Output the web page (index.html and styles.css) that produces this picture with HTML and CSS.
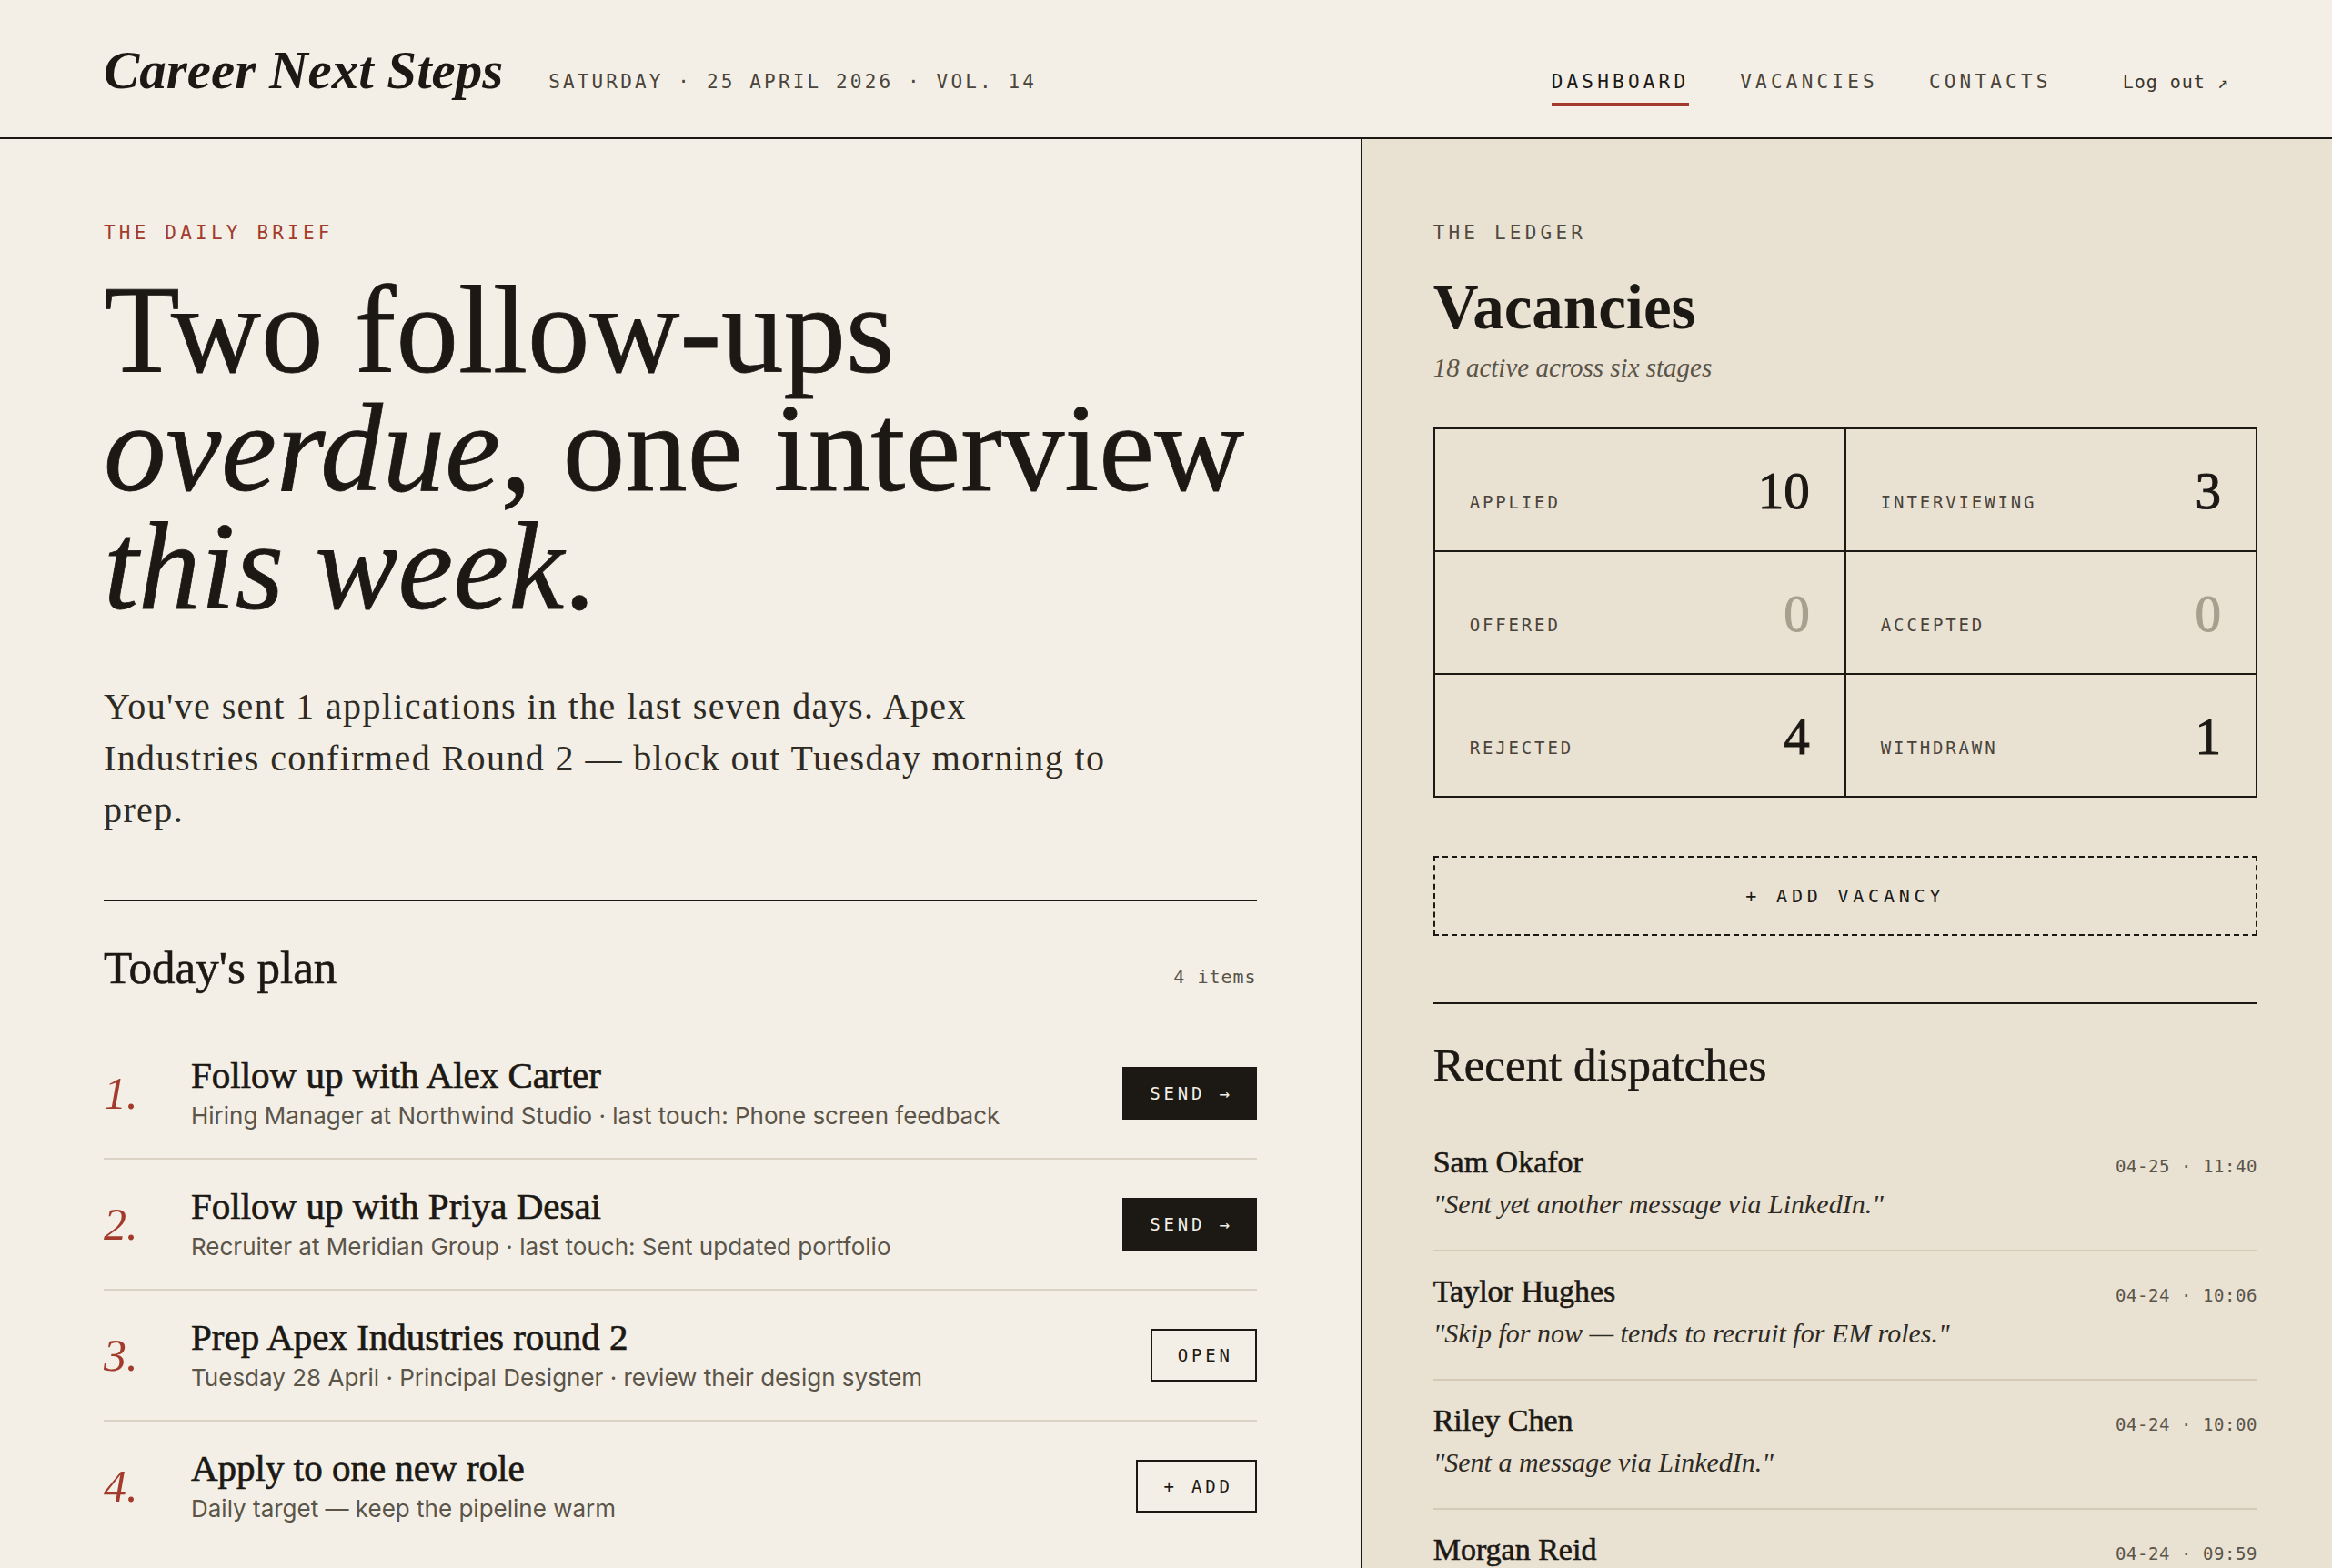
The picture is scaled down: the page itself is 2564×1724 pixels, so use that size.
FILE: index.html
```html
<!DOCTYPE html>
<html lang="en">
<head>
  <meta charset="UTF-8" />
  <meta name="viewport" content="width=device-width, initial-scale=1" />
  <title>Career Next Steps — Dashboard</title>
  <link rel="stylesheet" href="styles.css">
</head>
<body>
  <header class="masthead">
    <div class="brand">
      <span class="logo">Career Next Steps</span>
      <span class="dateline">Saturday · 25 April 2026 · Vol. 14</span>
    </div>
    <nav class="nav">
      <a class="nav-link active" href="#">Dashboard</a>
      <a class="nav-link" href="#">Vacancies</a>
      <a class="nav-link" href="#">Contacts</a>
      <a class="nav-link logout" href="#">Log out ↗</a>
    </nav>
  </header>

  <main class="layout">
    <section class="brief">
      <p class="eyebrow red">The daily brief</p>
      <h1 class="headline">Two follow-ups<br><em>overdue</em>, one interview<br><em>this week</em>.</h1>
      <p class="lede">You've sent 1 applications in the last seven days. Apex<br>Industries confirmed Round 2 — block out Tuesday morning to prep.</p>

      <div class="plan">
        <div class="section-head">
          <h2>Today's plan</h2>
          <span class="count">4 items</span>
        </div>
        <ol class="plan-list">
          <li class="plan-item">
            <span class="plan-num">1.</span>
            <div>
              <div class="plan-title">Follow up with Alex Carter</div>
              <div class="plan-meta">Hiring Manager at Northwind Studio · last touch: Phone screen feedback</div>
            </div>
            <a class="btn btn-solid" href="#">Send →</a>
          </li>
          <li class="plan-item">
            <span class="plan-num">2.</span>
            <div>
              <div class="plan-title">Follow up with Priya Desai</div>
              <div class="plan-meta">Recruiter at Meridian Group · last touch: Sent updated portfolio</div>
            </div>
            <a class="btn btn-solid" href="#">Send →</a>
          </li>
          <li class="plan-item">
            <span class="plan-num">3.</span>
            <div>
              <div class="plan-title">Prep Apex Industries round 2</div>
              <div class="plan-meta">Tuesday 28 April · Principal Designer · review their design system</div>
            </div>
            <a class="btn btn-outline" href="#">Open</a>
          </li>
          <li class="plan-item">
            <span class="plan-num">4.</span>
            <div>
              <div class="plan-title">Apply to one new role</div>
              <div class="plan-meta">Daily target — keep the pipeline warm</div>
            </div>
            <a class="btn btn-outline" href="#">+ Add</a>
          </li>
        </ol>
      </div>
    </section>

    <aside class="ledger">
      <p class="eyebrow">The ledger</p>
      <h2 class="vac-title">Vacancies</h2>
      <p class="vac-sub">18 active across six stages</p>

      <div class="stats">
        <div class="stat"><span class="stat-label">Applied</span><span class="stat-num">10</span></div>
        <div class="stat"><span class="stat-label">Interviewing</span><span class="stat-num">3</span></div>
        <div class="stat"><span class="stat-label">Offered</span><span class="stat-num zero">0</span></div>
        <div class="stat"><span class="stat-label">Accepted</span><span class="stat-num zero">0</span></div>
        <div class="stat"><span class="stat-label">Rejected</span><span class="stat-num">4</span></div>
        <div class="stat"><span class="stat-label">Withdrawn</span><span class="stat-num">1</span></div>
      </div>

      <button class="add-vacancy" type="button">+ Add vacancy</button>

      <div class="dispatches">
        <div class="section-head">
          <h2>Recent dispatches</h2>
        </div>
        <ul class="dispatch-list">
          <li class="dispatch">
            <div class="dispatch-head">
              <span class="dispatch-name">Sam Okafor</span>
              <span class="dispatch-time">04-25 · 11:40</span>
            </div>
            <p class="dispatch-note">"Sent yet another message via LinkedIn."</p>
          </li>
          <li class="dispatch">
            <div class="dispatch-head">
              <span class="dispatch-name">Taylor Hughes</span>
              <span class="dispatch-time">04-24 · 10:06</span>
            </div>
            <p class="dispatch-note">"Skip for now — tends to recruit for EM roles."</p>
          </li>
          <li class="dispatch">
            <div class="dispatch-head">
              <span class="dispatch-name">Riley Chen</span>
              <span class="dispatch-time">04-24 · 10:00</span>
            </div>
            <p class="dispatch-note">"Sent a message via LinkedIn."</p>
          </li>
          <li class="dispatch">
            <div class="dispatch-head">
              <span class="dispatch-name">Morgan Reid</span>
              <span class="dispatch-time">04-24 · 09:59</span>
            </div>
            <p class="dispatch-note">"Intro call booked for next week."</p>
          </li>
        </ul>
      </div>
    </aside>
  </main>
</body>
</html>
```

FILE: styles.css
```css
* {
  box-sizing: border-box;
}

body {
  margin: 0;
  background: #f3efe6;
  color: #1c1915;
  font-family: "Liberation Serif", serif;
}

/* masthead */

.masthead {
  display: flex;
  justify-content: space-between;
  align-items: baseline;
  height: 153px;
  padding: 48px 113px 0 114px;
  border-bottom: 2px solid #1c1915;
}

.brand {
  display: flex;
  align-items: baseline;
  gap: 50px;
}

.logo {
  font-size: 59px;
  line-height: 1;
  font-style: italic;
  font-weight: 700;
}

.dateline,
.nav-link,
.eyebrow,
.count,
.btn,
.stat-label,
.add-vacancy,
.dispatch-time {
  font-family: "DejaVu Sans Mono", monospace;
  text-transform: uppercase;
}

.dateline {
  font-size: 21px;
  letter-spacing: 0.15em;
  color: #4a443b;
}

.nav {
  display: flex;
  align-items: baseline;
  gap: 56px;
}

.nav-link {
  font-size: 21px;
  line-height: 1.3;
  letter-spacing: 0.2em;
  color: #4a443b;
  text-decoration: none;
  padding-bottom: 9px;
  border-bottom: 4px solid transparent;
}

.nav-link.active {
  color: #1c1915;
  border-bottom-color: #a23b2c;
}

.nav-link.logout {
  margin-left: 22px;
  font-size: 20px;
  letter-spacing: 0.05em;
  text-transform: none;
  color: #3a352d;
}

/* columns */

.layout {
  display: grid;
  grid-template-columns: 7fr 5fr;
  min-height: calc(100vh - 153px);
}

.brief {
  padding: 90px 114px 40px;
}

.ledger {
  background: #e9e1d2;
  border-left: 2px solid #1c1915;
  padding: 90px 82px 40px 78px;
}

.eyebrow {
  margin: 0;
  font-size: 21px;
  line-height: 1.3;
  letter-spacing: 0.2em;
  color: #4f493f;
}

.eyebrow.red {
  color: #a23b2c;
}

.headline {
  margin: 28px 0 0;
  font-size: 137px;
  line-height: 130px;
  font-weight: 400;
  -webkit-text-stroke: 0.8px #1c1915;
}

.lede {
  margin: 60px 0 0;
  max-width: 1160px;
  font-size: 40px;
  line-height: 57px;
  letter-spacing: 0.035em;
  color: #2e2a24;
}

/* today's plan */

.plan {
  margin-top: 70px;
  padding-top: 47px;
  border-top: 2px solid #1c1915;
}

.section-head {
  display: flex;
  justify-content: space-between;
  align-items: baseline;
  margin-bottom: 40px;
}

.section-head h2 {
  margin: 0;
  font-size: 51px;
  line-height: 53px;
  font-weight: 400;
  -webkit-text-stroke: 0.6px #1c1915;
}

.count {
  font-size: 20px;
  letter-spacing: 0.05em;
  text-transform: none;
  color: #5b5449;
}

.plan-list,
.dispatch-list {
  list-style: none;
  margin: 0;
  padding: 0;
}

.plan-item {
  display: grid;
  grid-template-columns: 96px 1fr auto;
  align-items: center;
  padding: 28px 0;
  border-bottom: 2px solid #d9d2c5;
}

.plan-item:last-child {
  border-bottom: none;
}

.plan-num {
  font-size: 50px;
  line-height: 1;
  font-style: italic;
  color: #a23b2c;
}

.plan-title {
  font-size: 41px;
  line-height: 46px;
  -webkit-text-stroke: 0.7px #1c1915;
}

.plan-meta {
  margin-top: 3px;
  font-family: Inter, "Noto Sans", sans-serif;
  font-size: 26px;
  line-height: 37px;
  color: #5b5449;
}

.btn {
  display: inline-flex;
  align-items: center;
  height: 58px;
  padding: 0 24px 0 28px;
  font-size: 19px;
  letter-spacing: 0.2em;
  text-decoration: none;
  border: 2px solid #1c1915;
}

.btn-solid {
  background: #1c1915;
  color: #f3efe6;
}

.btn-outline {
  color: #1c1915;
}

/* ledger */

.vac-title {
  margin: 31px 0 0;
  font-size: 69px;
  line-height: 1.1;
  font-weight: 700;
}

.vac-sub {
  margin: 9px 0 0;
  font-size: 29px;
  line-height: 1.3;
  font-style: italic;
  color: #5b5449;
}

.stats {
  margin-top: 46px;
  display: grid;
  grid-template-columns: 1fr 1fr;
  gap: 2px;
  background: #1c1915;
  border: 2px solid #1c1915;
}

.stat {
  display: flex;
  justify-content: space-between;
  align-items: baseline;
  height: 133px;
  padding: 39px 38px 38px;
  background: #e9e1d2;
}

.stat-label {
  font-size: 19px;
  letter-spacing: 0.15em;
  color: #4a443b;
}

.stat-num {
  font-size: 57px;
  line-height: 1;
  -webkit-text-stroke: 1px currentColor;
}

.stat-num.zero {
  color: #a89f8f;
}

.add-vacancy {
  display: block;
  width: 100%;
  height: 88px;
  margin-top: 64px;
  background: transparent;
  border: 2px dashed #1c1915;
  font-size: 20px;
  letter-spacing: 0.24em;
  color: #1c1915;
  cursor: pointer;
}

.dispatches {
  margin-top: 73px;
  padding-top: 41px;
  border-top: 2px solid #1c1915;
}

.dispatches .section-head {
  margin-bottom: 36px;
}

.dispatch {
  padding: 24px 0 31px;
  border-bottom: 2px solid #d5cab7;
}

.dispatch-head {
  display: flex;
  justify-content: space-between;
  align-items: baseline;
}

.dispatch-name {
  font-size: 34px;
  line-height: 40px;
  -webkit-text-stroke: 0.6px #1c1915;
}

.dispatch-time {
  font-size: 19px;
  letter-spacing: 0.03em;
  color: #5b5449;
}

.dispatch-note {
  margin: 6px 0 0;
  font-size: 30px;
  line-height: 39px;
  font-style: italic;
  color: #2e2a24;
}
```
